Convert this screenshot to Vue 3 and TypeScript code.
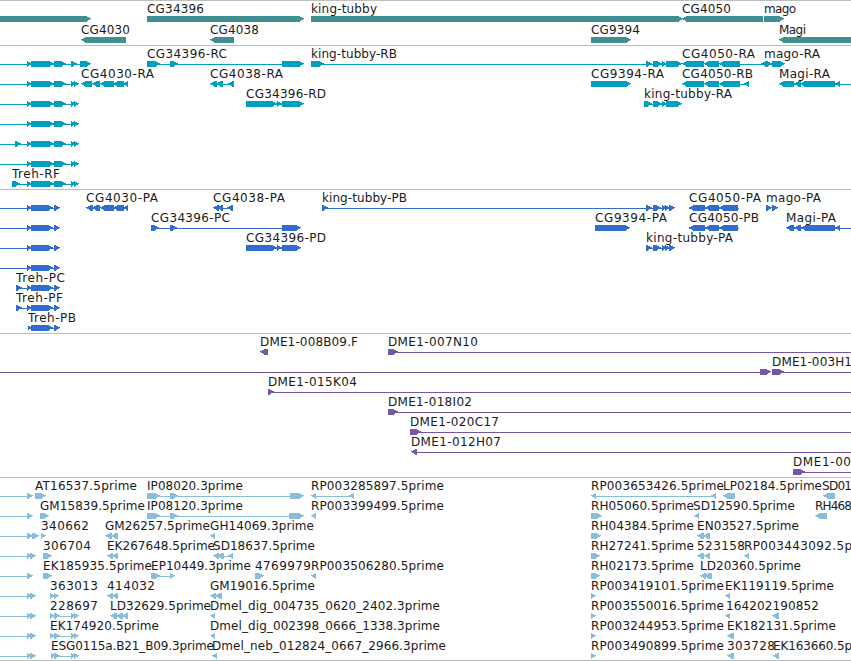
<script setup lang="ts">
interface Label {
  x: number;
  end: number;
  text: string;
}

interface Row {
  labels: Label[];
  lines: number[][];
  arrows: string[];
}

interface Track {
  name: string;
  top: number;
  height: number;
  pitch: number;
  rows: Row[];
}

// Labels are written as "x,end,text", shapes as ">x1-x2", "<x1-x2" or "_x1-x2"
function row(shapes: string, ...labels: string[]): Row {
  const parsed: Row = { labels: [], lines: [], arrows: [] };
  for (const shape of shapes.split(' ')) {
    const [x1, x2] = shape.slice(1).split('-').map(Number);
    if (shape[0] === '_') parsed.lines.push([x1, x2]);
    else parsed.arrows.push(arrow(shape[0], x1, x2));
  }
  parsed.labels = labels.map((label) => {
    const [x, end, text] = label.split(',');
    return { x: Number(x), end: Number(end), text };
  });
  return parsed;
}

// How far each pixel row of the head stops short of the tip
const head = [4, 2, 0, 1, 3, 4];

function arrow(direction: string, x1: number, x2: number): string {
  const [tail, tip, sign] = direction === '>' ? [x1, x2, -1] : [x2, x1, 1];
  const steps = head.map((inset, y) => `H${tip + sign * inset}V${y + 1}`).join('');
  return `M${tail} 0${steps}H${tail}z`;
}

const treh = '>27-32 >31-54 >54-66';
const trehEnd = '>71-76 >74-79';
const tubby = '>653-662 >662-667 >666-682';
const tubbyProtein = '>646-652 _646-674 >653-661 >662-667 >665-670 >669-675';
const cg4050 = '<682-704 <704-719 <719-740';
const cg4050Protein = '<689-705 <705-719 <719-738 _689-739';

const tracks: Track[] = [
  {
    name: 'gene',
    top: 0,
    height: 45,
    pitch: 21,
    rows: [
      row('>0-91 >147-304 >311-683 <682-763 >764-784',
        '147,204,CG34396', '311,377,king-tubby', '682,731,CG4050', '764,796,mago'),
      row('<81-126 <210-234 >591-631 <779-860',
        '81,130,CG4030', '210,259,CG4038', '591,640,CG9394', '779,806,Magi'),
    ],
  },
  {
    name: 'transcript',
    top: 45,
    height: 144,
    pitch: 20,
    rows: [
      row(`_0-86 ${treh} >71-77 >80-91 >147-160 >170-178 _147-290 >282-304 >311-324 _311-670 >646-652 ${tubby} ${cg4050} _740-775 <761-767 >765-772 >772-785`,
        '147,227,CG34396-RC', '311,397,king-tubby-RB', '682,755,CG4050-RA', '764,820,mago-RA'),
      row(`_0-76 ${treh} ${trehEnd} <81-92 <92-100 <100-114 <113-124 <123-128 <210-217 <216-223 _212-232 <228-234 >591-631 ${cg4050} _740-745 <744-749 <779-794 <794-801 <800-835 <835-840 _790-851`,
        '81,154,CG4030-RA', '210,283,CG4038-RA', '591,664,CG9394-RA', '682,753,CG4050-RB', '779,830,Magi-RA'),
      row(`_0-76 ${treh} ${trehEnd} >246-277 _270-290 >277-282 >282-304 >644-652 _645-670 ${tubby}`,
        '246,326,CG34396-RD', '644,732,king-tubby-RA'),
      row(`_0-76 ${treh} ${trehEnd}`),
      row(`_0-76 >15-21 ${treh} ${trehEnd}`),
      row(`_0-76 ${treh} ${trehEnd}`),
      row(`_12-76 >12-20 ${treh} ${trehEnd}`, '12,60,Treh-RF'),
    ],
  },
  {
    name: 'protein',
    top: 189,
    height: 144,
    pitch: 20,
    rows: [
      row(`_0-58 >27-32 >31-53 >54-60 <86-93 <92-100 <100-114 <113-124 <123-128 <213-219 <217-223 _215-232 <227-233 >322-328 _322-646 ${tubbyProtein} ${cg4050Protein} >766-772 >772-778`,
        '86,158,CG4030-PA', '213,285,CG4038-PA', '322,407,king-tubby-PB', '689,761,CG4050-PA', '766,821,mago-PA'),
      row(`_0-58 >27-32 >31-53 >54-60 >151-159 _151-290 >170-177 >282-301 >595-630 ${cg4050Protein} <786-794 <794-801 <801-835 <835-840 _790-851`,
        '151,230,CG34396-PC', '595,667,CG9394-PA', '689,759,CG4050-PB', '786,836,Magi-PA'),
      row(`_0-58 >27-32 >31-53 >54-60 >246-277 _270-290 >277-282 >282-301 ${tubbyProtein}`,
        '246,326,CG34396-PD', '646,733,king-tubby-PA'),
      row('_0-58 >27-32 >31-53 >54-60'),
      row('_16-58 >16-22 >27-32 >31-53 >54-60', '16,65,Treh-PC'),
      row('_16-58 >16-22 >27-32 >31-53 >54-60', '16,63,Treh-PF'),
      row('_28-58 >28-32 >31-53 >54-60', '28,76,Treh-PB'),
    ],
  },
  {
    name: 'clone',
    top: 333,
    height: 144,
    pitch: 20,
    rows: [
      row('<260-268 >388-398 _388-851', '260,358,DME1-008B09.F', '388,478,DME1-007N10'),
      row('_0-770 >760-771 >772-784 _772-851', '772,852,DME1-003H1'),
      row('>268-274 _268-851', '268,357,DME1-015K04'),
      row('>388-398 _388-851', '388,472,DME1-018I02'),
      row('>410-421 _410-851', '410,499,DME1-020C17'),
      row('<411-417 _413-851', '411,501,DME1-012H07'),
      row('>793-805 _793-851', '793,851,DME1-00'),
    ],
  },
  {
    name: 'est',
    top: 477,
    height: 183,
    pitch: 20,
    rows: [
      row('_0-30 >27-33 >35-46 >147-160 >170-178 _147-295 >290-304 <311-316 _313-353 <349-354 <591-596 _593-715 <711-716 <723-735 <823-835',
        '35,137,AT16537.5prime', '147,243,IP08020.3prime', '311,444,RP003285897.5prime', '591,724,RP003653426.5prime', '723,822,LP02184.5prime', '822,852,SD01'),
      row('_0-30 >27-33 >40-49 >147-160 >170-178 _147-295 >289-304 <311-316 >591-602 <694-699 <815-827',
        '40,145,GM15839.5prime', '147,243,IP08120.3prime', '311,444,RP003399499.5prime', '591,694,RH05060.5prime', '693,795,SD12590.5prime', '815,852,RH468'),
      row('_0-36 >27-33 >32-39 >41-46 <105-112 <111-118 <210-215 >591-601 <697-704 <703-710',
        '41,89,340662', '105,210,GM26257.5prime', '210,314,GH14069.3prime', '591,694,RH04384.5prime', '697,799,EN03527.5prime'),
      row('_0-34 >27-32 >30-36 >43-52 <107-113 <112-118 <213-219 <217-224 _215-232 <228-233 >591-600 <697-704 <704-710 <744-749',
        '43,91,306704', '107,215,EK267648.5prime', '213,315,SD18637.5prime', '591,694,RH27241.5prime', '697,745,523158', '744,852,RP003443092.5p'),
      row('_0-30 >27-33 >43-52 >151-160 _151-173 >170-175 >255-264 <311-316 >591-600 <700-706 <704-712',
        '43,152,EK185935.5prime', '151,251,EP10449.3prime', '255,311,4769979', '311,444,RP003506280.5prime', '591,694,RH02173.5prime', '700,801,LD20360.5prime'),
      row('_0-34 >27-32 >30-36 >50-55 >54-59 <107-113 <112-118 <210-216 <215-222 >591-596 <725-730',
        '50,98,363013', '107,155,414032', '210,315,GM19016.5prime', '591,724,RP003419101.5prime', '725,834,EK119119.5prime'),
      row('_0-34 >27-32 >30-36 >50-55 >54-60 _50-77 >71-76 >74-79 <110-117 <116-123 <122-128 <210-215 >591-596 <725-730 <772-779',
        '50,98,228697', '110,211,LD32629.5prime', '210,440,Dmel_dig_004735_0620_2402.3prime', '591,724,RP003550016.5prime', '726,819,164202190852'),
      row('_0-34 >27-32 >30-36 >50-55 >54-60 _50-77 >71-76 >74-79 <210-215 >591-596 <727-734',
        '50,159,EK174920.5prime', '210,440,Dmel_dig_002398_0666_1338.3prime', '591,724,RP003244953.5prime', '727,836,EK182131.5prime'),
      row('_0-34 >27-32 >30-36 >51-56 >54-60 _51-77 >71-76 >74-79 <212-217 >591-596 <727-734 <773-779',
        '51,214,ESG0115a.B21_B09.3prime', '212,446,Dmel_neb_012824_0667_2966.3prime', '591,724,RP003490899.5prime', '727,775,303728', '773,852,EK163660.5p'),
    ],
  },
];
</script>

<template>
  <main class="browser">
    <section v-for="track in tracks" :key="track.name" class="track" :class="track.name">
      <svg width="851" :height="track.height - 1" :viewBox="`0 1 851 ${track.height - 1}`">
        <g
          v-for="(item, index) in track.rows"
          :key="index"
          :transform="`translate(0 ${index * track.pitch})`"
        >
          <g class="shapes" transform="translate(0 16)">
            <rect
              v-for="([x1, x2], i) in item.lines"
              :key="i"
              :x="x1"
              y="3"
              :width="x2 - x1"
              height="1"
            />
            <path v-for="(d, i) in item.arrows" :key="i" :d="d" />
          </g>
          <text
            v-for="label in item.labels"
            :key="label.text"
            :x="label.x"
            y="13"
            :textLength="label.end - label.x"
          >{{ label.text }}</text>
        </g>
      </svg>
    </section>
  </main>
</template>

<style scoped>
.browser {
  width: 851px;
  height: 660px;
  overflow: hidden;
  background: #fff;
  border-bottom: 1px solid #bebebe;
}

.track {
  border-top: 1px solid #bebebe;
}

.track svg {
  display: block;
}

.track text {
  font-family: "DejaVu Sans", sans-serif;
  font-size: 12px;
  fill: #1a1a1a;
}

.shapes {
  shape-rendering: crispEdges;
}

.gene .shapes {
  fill: #3f8f93;
}

.transcript .shapes {
  fill: #009fc0;
}

.protein .shapes {
  fill: #306dcc;
}

.clone .shapes {
  fill: #7557a7;
}

.est .shapes {
  fill: #88bddc;
}
</style>

<style>
body {
  margin: 0;
  background: #fff;
}
</style>
